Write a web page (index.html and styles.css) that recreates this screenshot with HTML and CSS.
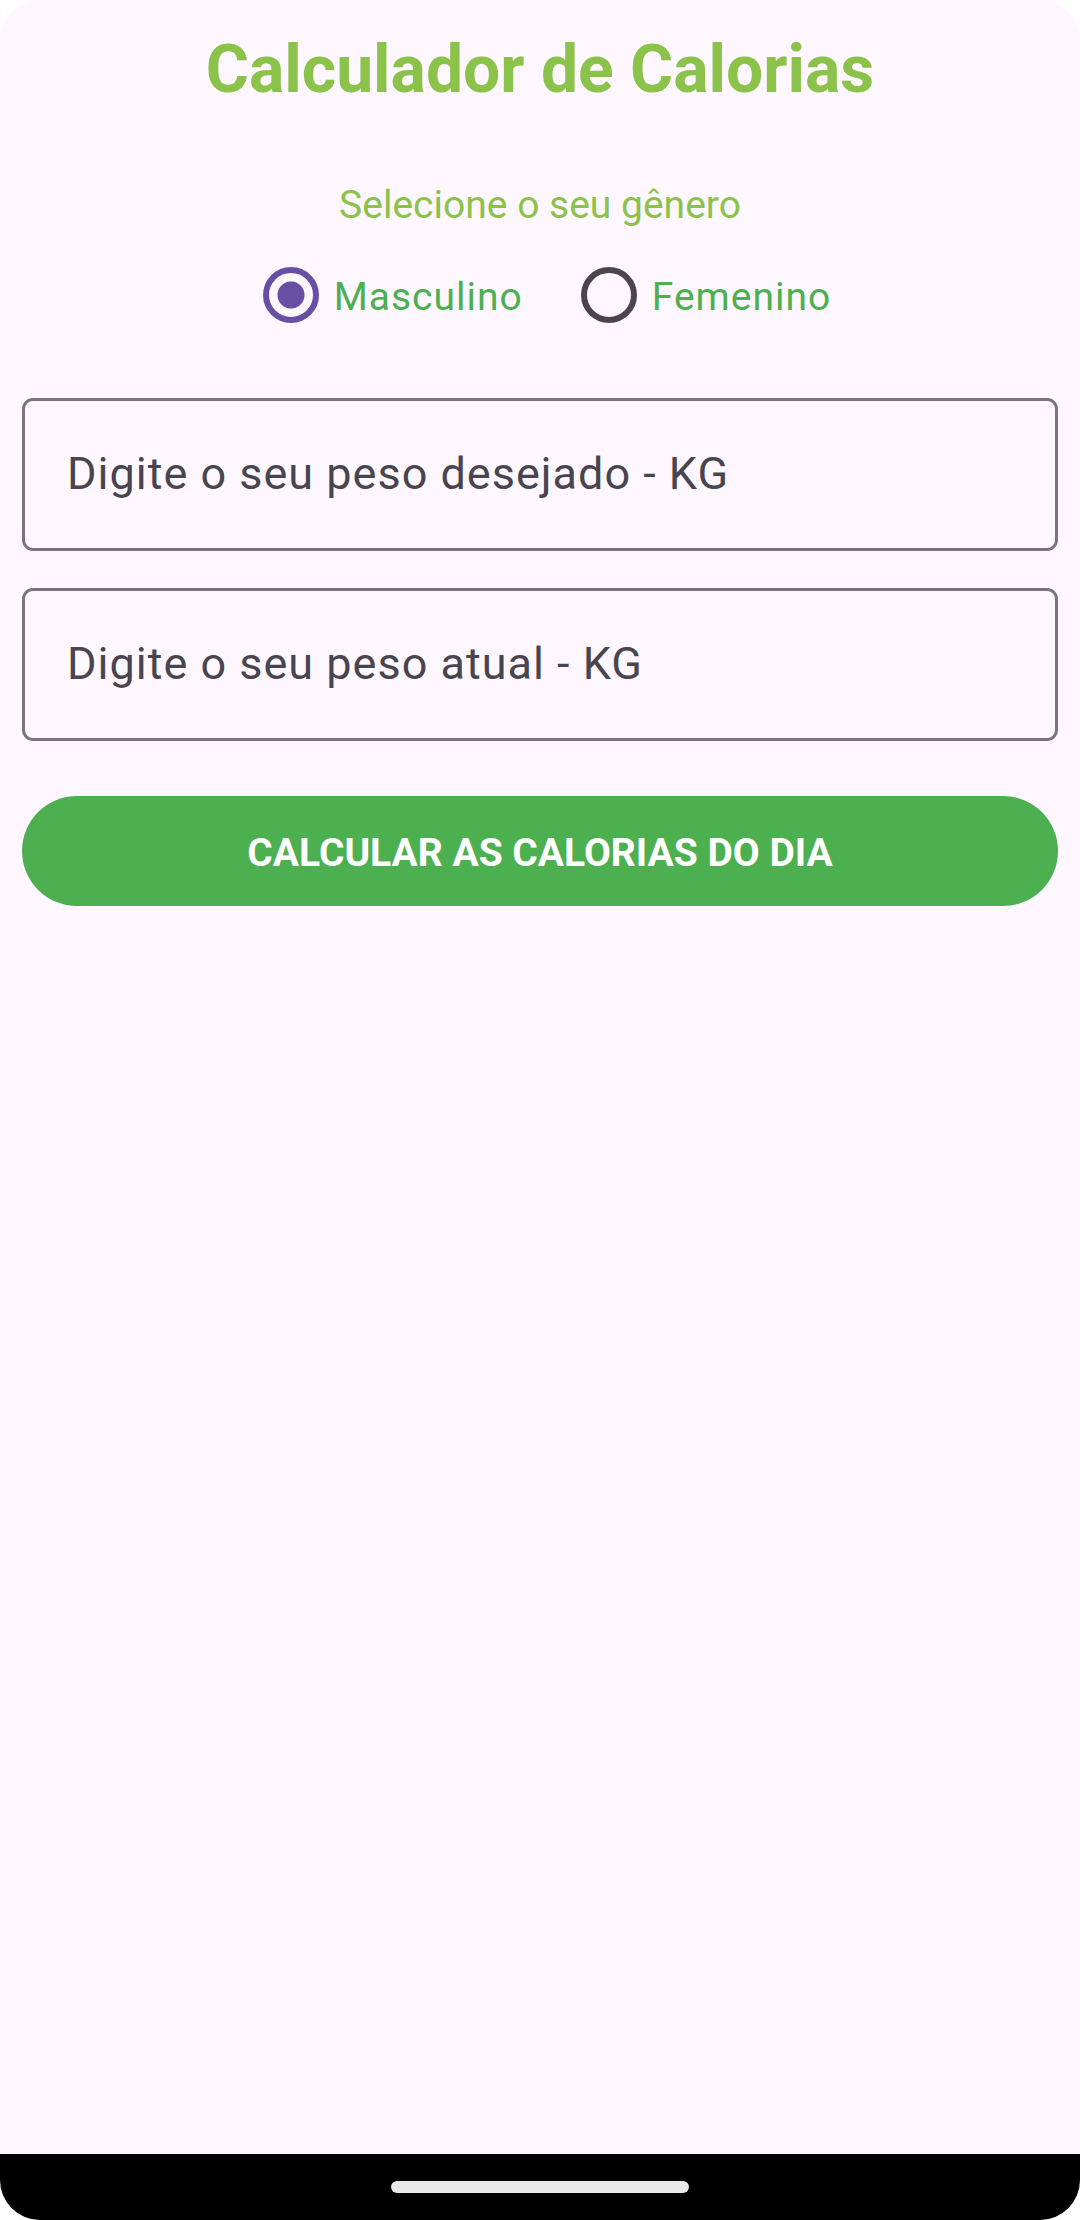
FILE: index.html
```html
<!DOCTYPE html>
<html lang="pt-BR">
<head>
<meta charset="utf-8">
<meta name="viewport" content="width=device-width, initial-scale=1">
<title>Calculador de Calorias</title>
<link rel="stylesheet" href="styles.css">
</head>
<body>
<div class="screen">
  <main class="content">
    <h1 class="title">Calculador de Calorias</h1>
    <form class="form">
      <fieldset class="gender">
        <legend class="gender-label">Selecione o seu gênero</legend>
        <div class="gender-options">
          <label class="option"><input class="radio" type="radio" name="genero" checked><span class="option-text">Masculino</span></label>
          <label class="option"><input class="radio" type="radio" name="genero"><span class="option-text">Femenino</span></label>
        </div>
      </fieldset>
      <div class="fields">
        <input class="field" type="text" aria-label="Peso desejado em KG" placeholder="Digite o seu peso desejado - KG">
        <input class="field" type="text" aria-label="Peso atual em KG" placeholder="Digite o seu peso atual - KG">
      </div>
      <button class="submit" type="button">CALCULAR AS CALORIAS DO DIA</button>
    </form>
  </main>
  <footer class="navbar"><div class="handle"></div></footer>
</div>
</body>
</html>
```
FILE: styles.css
```css
* { box-sizing: border-box; }
html { background: #fff; }
body { margin: 0; font-family: Roboto, sans-serif; }
.screen { display: flex; flex-direction: column; min-height: 100vh; background: #fef7ff; border-radius: 40px; overflow: hidden; }
.content { flex: 1; padding: 26px 22px; }
.title { margin: 0; font-size: 66px; line-height: 88px; font-weight: 700; text-align: center; color: #8bc34a; }
.gender { margin: 0; padding: 0; border: 0; min-width: 0; }
.gender-label { width: 100%; padding: 67px 0 0; font-size: 39px; line-height: 48px; text-align: center; color: #8bc34a; }
.gender-options { display: flex; justify-content: center; gap: 58px; padding: 37px 0 0 14px; }
.option { display: flex; align-items: center; gap: 15px; font-size: 39px; line-height: 54px; letter-spacing: 1px; color: #4caf50; }
.option-text { padding-top: 4px; }
.radio { appearance: none; width: 56px; height: 56px; margin: 0; border: 6px solid #49454f; border-radius: 50%; }
.radio:checked { border-color: #6750a4; background: radial-gradient(circle, #6750a4 13px, transparent 14px); }
.fields { display: flex; flex-direction: column; gap: 37px; padding-top: 74px; }
.field { width: 100%; height: 153px; padding: 0 42px 2px; border: 3px solid #79747e; border-radius: 11px; background: transparent; font: 400 45px Roboto, sans-serif; letter-spacing: 1px; color: #49454f; }
.field::placeholder { color: #49454f; opacity: 1; }
.submit { display: block; width: 100%; height: 110px; margin-top: 55px; padding: 4px 0 0; border: 0; border-radius: 55px; background: #4caf50; color: #fff; font: 700 39px Roboto, sans-serif; }
.navbar { display: flex; align-items: center; justify-content: center; height: 66px; background: #000; }
.handle { width: 298px; height: 12px; border-radius: 6px; background: #e9e9e9; }
```
